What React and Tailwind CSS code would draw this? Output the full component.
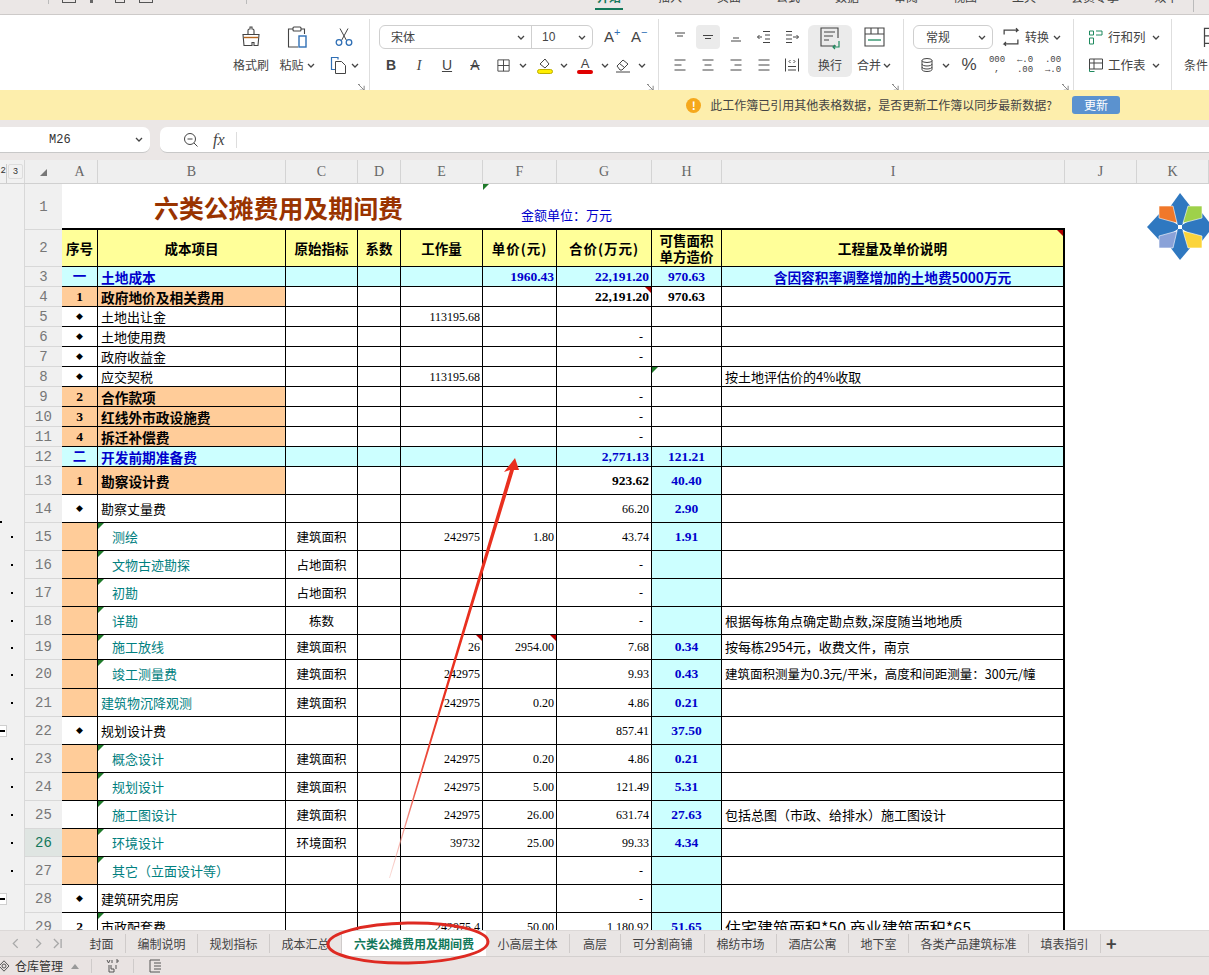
import React from 'react';
import clsx from 'clsx';

const CJK = "font-['Noto_Sans_CJK_SC',sans-serif]";
const NUM = "font-['Liberation_Serif','Noto_Sans_CJK_SC',serif]";

const ORANGE = 'bg-[#ffcc99]';
const CYAN = 'bg-[#ccffff]';
const YELLOW = 'bg-[#ffff99]';

const Chev = ({ className = '' }) => (
    <svg viewBox="0 0 8 5" className={clsx('h-[5px] w-[8px] shrink-0', className)} fill="none" stroke="#444" strokeWidth="1.3">
        <path d="M1 1l3 3 3-3" />
    </svg>
);

const Ic = ({ size = 16, children, className = '' }) => (
    <svg viewBox="0 0 16 16" width={size} height={size} fill="none" stroke="#444" strokeWidth="1" className={clsx('shrink-0', className)}>
        {children}
    </svg>
);

const Corner = () => (
    <svg viewBox="0 0 8 8" className="h-[7px] w-[7px]" fill="none" stroke="#777" strokeWidth="1">
        <path d="M0 .5h2M.5 .5L6.5 6.5M7 2v5H2" />
    </svg>
);

const Group = ({ className, children, corner }) => (
    <div className={clsx('flex h-full shrink-0 flex-col border-r border-[#dedede]', className)}>
        <div className="flex flex-1 pt-[6px]">{children}</div>
        <div className="flex h-[10px] justify-end pr-[4px]">{corner && <Corner />}</div>
    </div>
);

// one row of the ribbon, same height everywhere
const RR = ({ className, children }) => <div className={clsx('flex h-[24px] items-center', className)}>{children}</div>;

const AlignIcon = ({ d }) => (
    <Ic size={16}>
        <path d={d} />
    </Ic>
);

function Ribbon() {
    return (
        <div className={clsx('flex h-[75px] shrink-0 overflow-hidden bg-white text-[12px] text-[#444] shadow-[0_1px_2px_#bbb]', CJK)}>
            <div className="w-[232px] shrink-0" />
            <Group className="my-[4px] w-[138px]" corner>
                <div className="flex w-[38px] flex-col items-center gap-[4px]">
                    <RR>
                        <svg viewBox="0 0 24 24" width="24" height="24" fill="none" stroke="#444" strokeWidth="1.1">
                            <path d="M9 9V5.500c0-1 .8-1.500 1.500-1.500h.5V2h2v2h.5c.8 0 1.500.6 1.500 1.500V9" />
                            <path d="M4 9.500h16l-1 11H15v-3h-2v3H5z" />
                            <path d="M5 12.500h14" stroke="#b5651d" strokeWidth="1.4" />
                        </svg>
                    </RR>
                    <RR>格式刷</RR>
                </div>
                <div className="ml-[2px] flex w-[50px] flex-col items-center gap-[4px]">
                    <RR>
                        <svg viewBox="0 0 24 24" width="24" height="24" fill="none" stroke="#444" strokeWidth="1.1">
                            <path d="M8 4H3.500v18H13M16 4h3.500v5" />
                            <rect x="8" y="2" width="8" height="4" rx="1" />
                            <rect x="14" y="11" width="7" height="11" stroke="#2f6fb5" strokeWidth="1.4" />
                        </svg>
                    </RR>
                    <RR className="gap-[3px]">粘贴<Chev /></RR>
                </div>
                <div className="flex w-[46px] flex-col items-center gap-[4px] pr-[2px]">
                    <RR>
                        <svg viewBox="0 0 20 20" width="20" height="20" fill="none" stroke="#444" strokeWidth="1">
                            <path d="M6 1.500l6.500 12M14 1.500L7.500 13.500" />
                            <circle cx="5" cy="15.500" r="2.800" stroke="#2f6fb5" strokeWidth="1.3" />
                            <circle cx="15" cy="15.500" r="2.800" stroke="#2f6fb5" strokeWidth="1.3" />
                        </svg>
                    </RR>
                    <RR className="gap-[3px]">
                        <svg viewBox="0 0 18 18" width="18" height="18" fill="none" stroke="#444" strokeWidth="1">
                            <path d="M8 3.500V1.500H1.500v12H5" stroke="#2f6fb5" strokeWidth="1.2" />
                            <path d="M5.500 5.500h6l4 4v8h-10z" />
                        </svg>
                        <Chev />
                    </RR>
                </div>
            </Group>
            <Group className="my-[4px] w-[289px] pl-[9px]" corner>
                <div className="flex flex-col gap-[4px]">
                    <div className="flex items-center">
                        <div className="flex h-[24px] w-[214px] items-center rounded-[6px] border border-[#cfcfcf]">
                            <div className="flex h-full w-[152px] items-center justify-between border-r border-[#cfcfcf] pl-[11px] pr-[6px]">
                                <span>宋体</span><Chev />
                            </div>
                            <div className="flex h-full flex-1 items-center justify-between pl-[10px] pr-[6px] font-['Liberation_Sans']">
                                <span>10</span><Chev />
                            </div>
                        </div>
                        <div className={clsx('ml-[11px] w-[27px] text-[15px]', "font-['Liberation_Sans']")}>A<sup className="text-[11px] text-[#2f6fb5]">+</sup></div>
                        <div className={clsx('w-[27px] text-[15px]', "font-['Liberation_Sans']")}>A<sup className="text-[11px] text-[#2f6fb5]">−</sup></div>
                    </div>
                    <RR className="-ml-[2px] font-['Liberation_Sans'] text-[14px]">
                        <div className="w-[28px] text-center font-bold">B</div>
                        <div className="w-[28px] text-center font-['Liberation_Serif'] italic">I</div>
                        <div className="w-[28px] text-center underline">U</div>
                        <div className="w-[28px] text-center line-through">A</div>
                        <div className="flex w-[41px] items-center gap-[8px] pl-[7px]">
                            <Ic size={15}><path d="M2 2h12v12H2zM8 2v12M2 8h12" /></Ic><Chev />
                        </div>
                        <div className="flex w-[41px] items-center gap-[7px] pl-[7px]">
                            <svg viewBox="0 0 16 18" width="16" height="18" fill="none" stroke="#444" strokeWidth="1">
                                <path d="M3 8l5-5 4 5-4 4z" />
                                <rect x=".5" y="13.500" width="15" height="4" rx="2" fill="#ffee00" stroke="#bcae00" />
                            </svg>
                            <Chev />
                        </div>
                        <div className="flex w-[40px] items-center gap-[8px] pl-[6px]">
                            <div className="flex w-[16px] flex-col items-center">
                                <span className="text-[13px] leading-[13px]">A</span>
                                <div className="h-[4px] w-[16px] rounded-[2px] bg-[#e00000]" />
                            </div>
                            <Chev />
                        </div>
                        <div className="flex items-center gap-[7px] pl-[4px]">
                            <Ic size={16}><path d="M2 9l6-6 5 4-6 6H5zM4.500 6.500l5 4M1 15h14" /></Ic><Chev />
                        </div>
                    </RR>
                </div>
            </Group>
            <Group className="my-[4px] w-[245px] pl-[7px]" corner>
                <div className="grid h-[52px] w-[140px] grid-cols-5 gap-y-[4px]">
                    <RR className="justify-center"><AlignIcon d="M3 4h10M5 7h6" /></RR>
                    <RR className="justify-center"><div className="flex h-[24px] w-[24px] items-center justify-center rounded-[4px] bg-[#ebebeb]"><AlignIcon d="M3 6.500h10M5 9.500h6" /></div></RR>
                    <RR className="justify-center"><AlignIcon d="M5 9h6M3 12h10" /></RR>
                    <RR className="justify-center"><AlignIcon d="M7 2.500h7M9 6h5M9 10h5M7 13.500h7M6 8H1.500M3.500 6L1.500 8l2 2" /></RR>
                    <RR className="justify-center"><AlignIcon d="M8 2.500H2M8 6H2M8 10H2M8 13.500H2M9 8h5.500M12.500 6l2 2-2 2" /></RR>
                    <RR className="justify-center"><AlignIcon d="M2.500 3h11M2.500 8h7M2.500 13h11" /></RR>
                    <RR className="justify-center"><AlignIcon d="M2.500 3h11M4.500 8h7M2.500 13h11" /></RR>
                    <RR className="justify-center"><AlignIcon d="M2.500 3h11M6.500 8h7M2.500 13h11" /></RR>
                    <RR className="justify-center"><AlignIcon d="M2.500 3h11M2.500 8h11M2.500 13h11" /></RR>
                    <RR className="justify-center"><AlignIcon d="M1.500 1.500v13M14.500 1.500v13M4 9.500h8M4 13h8M6.500 3L5 4.500 6.500 6M9.500 3L11 4.500 9.500 6" /></RR>
                </div>
                <div className="ml-[2px] flex h-[52px] w-[44px] flex-col items-center rounded-[6px] bg-[#ebebeb] pt-[1px]">
                    <svg viewBox="0 0 24 24" width="24" height="24" fill="none" stroke="#444" strokeWidth="1.100">
                        <path d="M18 20H3V2h17v10M6 6h11M6 10h9M6 14h5" />
                        <path d="M21 15v6h-6M17 19l-2 2 2 2" stroke="#1f8a5f" strokeWidth="1.200" />
                    </svg>
                    <span className="mt-[6px]">换行</span>
                </div>
                <div className="flex w-[44px] flex-col items-center pt-[1px]">
                    <svg viewBox="0 0 24 24" width="24" height="24" fill="none" stroke="#444" strokeWidth="1.100">
                        <path d="M3 2h19v18H3zM3 8h19M9 2v6M16 2v6" />
                        <path d="M6 14h13" stroke="#1f8a5f" strokeWidth="1.300" />
                    </svg>
                    <span className="mt-[6px] flex items-center gap-[2px] whitespace-nowrap">合并<Chev /></span>
                </div>
            </Group>
            <Group className="my-[4px] w-[170px] pl-[9px]" corner>
                <div className="flex flex-col gap-[4px]">
                    <RR>
                        <div className="flex h-[24px] w-[80px] items-center justify-between rounded-[6px] border border-[#cfcfcf] pl-[12px] pr-[6px]">
                            <span>常规</span><Chev />
                        </div>
                        <div className="ml-[8px] flex items-center gap-[4px]">
                            <Ic size={20}><path d="M2.500 6V2.500h11l-1.500-1.500M13.500 2.500L12 4M13.500 10v3.500h-11l1.500-1.500M2.500 13.500L4 15" /></Ic>
                            <span>转换</span><Chev />
                        </div>
                    </RR>
                    <RR>
                        <div className="flex w-[42px] items-center gap-[7px] pl-[6px]">
                            <Ic size={16}><ellipse cx="8" cy="3.500" rx="5" ry="2" /><path d="M3 3.500v9c0 1.100 2.200 2 5 2s5-.9 5-2v-9M3 7c0 1.100 2.200 2 5 2s5-.9 5-2M3 10c0 1.100 2.200 2 5 2s5-.9 5-2" /></Ic>
                            <Chev />
                        </div>
                        <div className="w-[28px] text-center text-[17px] font-['Liberation_Sans']">%</div>
                        <div className="flex w-[28px] flex-col items-center font-['Liberation_Mono'] text-[9px] leading-[9px]">000<span>,</span></div>
                        <div className="flex w-[28px] flex-col items-center font-['Liberation_Mono'] text-[9px] leading-[10px]"><span>←.0</span><span>.00</span></div>
                        <div className="flex w-[28px] flex-col items-center font-['Liberation_Mono'] text-[9px] leading-[10px]"><span>.00</span><span>→.0</span></div>
                    </RR>
                </div>
            </Group>
            <Group className="my-[4px] w-[98px] pl-[14px]">
                <div className="flex flex-col gap-[4px]">
                    <RR className="gap-[4px] whitespace-nowrap">
                        <Ic size={16}><path d="M1.500 2h4v4h-4zM8 2h6v4H8M1.500 9h4v6h-4z" stroke="#1f8a5f" /></Ic>
                        <span className="text-[12.500px]">行和列</span><Chev className="ml-[2px]" />
                    </RR>
                    <RR className="gap-[4px] whitespace-nowrap">
                        <Ic size={16}><path d="M1.500 2h13v10h-13zM1.500 6h13M6 2v10" /><path d="M1.500 12v2.500h5" stroke="#1f8a5f" /></Ic>
                        <span className="text-[12.500px]">工作表</span><Chev className="ml-[2px]" />
                    </RR>
                </div>
            </Group>
            <div className="flex w-[40px] shrink-0 flex-col items-start gap-[4px] pl-[12px] pt-[10px]">
                <RR className="pl-[18px]"><Ic size={20}><path d="M2 1h12v18H2zM2 7h12M2 13h12M8 1v18" /></Ic></RR>
                <RR className="whitespace-nowrap">条件</RR>
            </div>
        </div>
    );
}

const W = {
    a: 'w-[36px]', b: 'w-[188px]', c: 'w-[72px]', d: 'w-[43px]', e: 'w-[82px]',
    f: 'w-[74px]', g: 'w-[95px]', h: 'w-[70px]', i: 'w-[343px]', j: 'w-[72px]', k: 'w-[72px]',
};

const Tri = ({ red, className = '' }) => (
    <div
        className={clsx(
            'absolute top-0 h-0 w-0 border-t-[6px]',
            red ? 'right-0 border-l-[6px] border-l-transparent border-t-[#b00000]' : 'left-0 border-r-[6px] border-r-transparent border-t-[#1f7a2a]',
            className
        )}
    />
);

const Cell = ({ w, bg, className, children, red, green, last }) => (
    <div
        className={clsx(
            'relative flex shrink-0 items-center overflow-hidden whitespace-nowrap border-b border-black leading-[16px]',
            last ? 'border-r-2' : 'border-r',
            w,
            bg,
            className
        )}
    >
        {green && <Tri />}
        {red && <Tri red />}
        {children}
    </div>
);

const rows = [
    { n: 3, h: 'h-[20px]', t: 'sec', a: '一', b: '土地成本', f: '1960.43', g: '22,191.20', v: '970.63', i: '含因容积率调整增加的土地费5000万元' },
    { n: 4, h: 'h-[20px]', t: 'head', a: '1', b: '政府地价及相关费用', g: '22,191.20', v: '970.63', gRed: true, white: true },
    { n: 5, h: 'h-[20px]', t: 'item', b: '土地出让金', e: '113195.68', white: true },
    { n: 6, h: 'h-[20px]', t: 'item', b: '土地使用费', g: '-', white: true },
    { n: 7, h: 'h-[20px]', t: 'item', b: '政府收益金', g: '-', white: true },
    { n: 8, h: 'h-[20px]', t: 'item', b: '应交契税', e: '113195.68', i: '按土地评估价的4%收取', hGreen: true, white: true },
    { n: 9, h: 'h-[20px]', t: 'head', a: '2', b: '合作款项', g: '-', white: true },
    { n: 10, h: 'h-[20px]', t: 'head', a: '3', b: '红线外市政设施费', g: '-', white: true },
    { n: 11, h: 'h-[20px]', t: 'head', a: '4', b: '拆迁补偿费', g: '-', white: true },
    { n: 12, h: 'h-[20px]', t: 'sec', a: '二', b: '开发前期准备费', g: '2,771.13', v: '121.21' },
    { n: 13, h: 'h-[28px]', t: 'head', a: '1', b: '勘察设计费', g: '923.62', v: '40.40' },
    { n: 14, h: 'h-[28px]', t: 'item', b: '勘察丈量费', g: '66.20', v: '2.90', dot0: true },
    { n: 15, h: 'h-[28px]', t: 'sub', b: '测绘', c: '建筑面积', e: '242975', f: '1.80', g: '43.74', v: '1.91', dot: true },
    { n: 16, h: 'h-[28px]', t: 'sub', b: '文物古迹勘探', c: '占地面积', g: '-', dot: true },
    { n: 17, h: 'h-[28px]', t: 'sub', b: '初勘', c: '占地面积', g: '-', dot: true },
    { n: 18, h: 'h-[28px]', t: 'sub', b: '详勘', c: '栋数', g: '-', i: '根据每栋角点确定勘点数,深度随当地地质', dot: true },
    { n: 19, h: 'h-[25px]', t: 'sub', b: '施工放线', c: '建筑面积', e: '26', f: '2954.00', g: '7.68', v: '0.34', i: '按每栋2954元，收费文件，南京', eRed: true, fRed: true, dot: true },
    { n: 20, h: 'h-[29px]', t: 'sub', b: '竣工测量费', c: '建筑面积', e: '242975', g: '9.93', v: '0.43', i: '建筑面积测量为0.3元/平米，高度和间距测量：300元/幢', iSmall: true, dot: true },
    { n: 21, h: 'h-[28px]', t: 'sub', flush: true, noTri: true, b: '建筑物沉降观测', c: '建筑面积', e: '242975', f: '0.20', g: '4.86', v: '0.21', dot: true },
    { n: 22, h: 'h-[28px]', t: 'item', b: '规划设计费', g: '857.41', v: '37.50', minus: true },
    { n: 23, h: 'h-[28px]', t: 'sub', b: '概念设计', c: '建筑面积', e: '242975', f: '0.20', g: '4.86', v: '0.21', dot: true },
    { n: 24, h: 'h-[28px]', t: 'sub', b: '规划设计', c: '建筑面积', e: '242975', f: '5.00', g: '121.49', v: '5.31', dot: true },
    { n: 25, h: 'h-[28px]', t: 'sub', plain: true, b: '施工图设计', c: '建筑面积', e: '242975', f: '26.00', g: '631.74', v: '27.63', i: '包括总图（市政、给排水）施工图设计', dot: true },
    { n: 26, h: 'h-[28px]', t: 'sub', b: '环境设计', c: '环境面积', e: '39732', f: '25.00', g: '99.33', v: '4.34', dot: true, active: true },
    { n: 27, h: 'h-[28px]', t: 'sub', b: '其它（立面设计等）', c: '', g: '-', dot: true },
    { n: 28, h: 'h-[28px]', t: 'item', b: '建筑研究用房', g: '-', minus: true },
    { n: 29, h: 'h-[28px]', t: 'last', a: '2', b: '市政配套费', e: '242975.4', f: '50.00', g: '1,180.92', v: '51.65', i: '住宅建筑面积*50 商业建筑面积*65', bGreen: true },
];

const RowHead = ({ n, h, active, dot, dot0, minus }) => (
    <>
        <div className={clsx('flex w-[24px] shrink-0 bg-[#f1f1f1]', h, dot0 ? 'items-end justify-start' : 'items-center justify-center')}>
            {(dot || dot0) && <div className="h-[2px] w-[2px] bg-black" />}
            {minus && <div className="mr-auto flex h-[12px] w-[7px] items-center border-y border-r border-[#cfcfcf] bg-white"><div className="h-[1.500px] w-[5px] bg-black" /></div>}
        </div>
        <div
            className={clsx(
                "flex w-[38px] shrink-0 items-center justify-center border-b border-l border-[#d8d8d8] font-['Liberation_Mono'] text-[14px] leading-[16px]",
                h,
                active ? 'bg-[#dfe5e2] text-[#12785a]' : 'bg-[#f0f0f0] text-[#777]'
            )}
        >
            {n}
        </div>
    </>
);

function Row({ r }) {
    const isSec = r.t === 'sec';
    const rowBg = isSec ? CYAN : 'bg-white';
    const aBg = isSec ? CYAN : r.t === 'head' || (r.t === 'sub' && !r.plain) ? ORANGE : 'bg-white';
    const bBg = isSec ? CYAN : r.t === 'head' ? ORANGE : 'bg-white';
    const vBg = isSec ? CYAN : r.white ? 'bg-white' : CYAN;
    const nameBold = isSec || r.t === 'head';
    const numBlue = isSec ? 'font-bold text-[13.500px] text-[#0000cc]' : 'text-[12px] text-black';

    return (
        <div className={clsx('flex', r.h)}>
            <RowHead {...r} />
            <Cell w={W.a} bg={aBg} className={clsx('justify-center font-bold text-[13.500px]', NUM, isSec ? 'text-[#0000cc]' : 'text-black')}>
                {r.t === 'item' ? <span className="text-[7px]">◆</span> : r.a}
            </Cell>
            <Cell
                w={W.b}
                bg={bBg}
                green={(r.t === 'sub' && !r.noTri) || r.bGreen}
                className={clsx(
                    CJK,
                    r.t === 'sub' && !r.flush ? 'pl-[14px]' : 'pl-[3px]',
                    nameBold ? 'text-[13.700px] font-bold' : 'text-[13px]',
                    isSec ? 'text-[#0000cc]' : r.t === 'sub' ? 'text-[#008080]' : 'text-black'
                )}
            >
                {r.b}
            </Cell>
            <Cell w={W.c} bg={rowBg} className={clsx('justify-center text-[12.500px] text-black', CJK)}>{r.c}</Cell>
            <Cell w={W.d} bg={rowBg} />
            <Cell w={W.e} bg={rowBg} red={r.eRed} className={clsx('justify-end pr-[2px] text-[12px] text-black', NUM)}>{r.e}</Cell>
            <Cell w={W.f} bg={rowBg} red={r.fRed} className={clsx('justify-end pr-[2px]', NUM, numBlue)}>{r.f}</Cell>
            <Cell
                w={W.g}
                bg={rowBg}
                red={r.gRed}
                className={clsx('justify-end', r.g === '-' ? 'pr-[8px]' : 'pr-[2px]', NUM, r.t === 'head' && r.a === '1' && r.g !== '-' ? 'text-[13.500px] font-bold text-black' : numBlue)}
            >
                {r.g}
            </Cell>
            <Cell
                w={W.h}
                bg={vBg}
                green={r.hGreen}
                className={clsx('justify-center text-[13.500px] font-bold', NUM, r.white ? 'text-black' : 'text-[#0000cc]')}
            >
                {r.v}
            </Cell>
            <Cell
                w={W.i}
                bg={rowBg}
                last
                className={clsx(
                    CJK,
                    isSec ? 'justify-center text-[13.700px] font-bold text-[#0000cc]' : 'pl-[3px] text-black',
                    r.t === 'last' ? 'text-[16px]' : r.iSmall ? 'text-[12.500px]' : !isSec && 'text-[13px]'
                )}
            >
                {r.i}
            </Cell>
            <div className="flex-1 bg-white" />
        </div>
    );
}

const headers = [
    ['A', W.a], ['B', W.b], ['C', W.c], ['D', W.d], ['E', W.e], ['F', W.f],
    ['G', W.g], ['H', W.h], ['I', W.i], ['J', W.j], ['K', W.k],
];

const headerRow = [
    ['序号', W.a, ''],
    ['成本项目', W.b, ''],
    ['原始指标', W.c, ''],
    ['系数', W.d, ''],
    ['工作量', W.e, ''],
    ['单价(元)', W.f, 'tracking-[1px]'],
    ['合价(万元)', W.g, 'tracking-[1px]'],
];

function Sheet() {
    return (
        <div className="relative min-h-0 flex-1 overflow-hidden bg-white">
            <div className="flex h-[24px] border-b border-[#d0d0d0] bg-[#efefef]">
                <div className={clsx('flex w-[24px] shrink-0 gap-[1px] bg-[#f1f1f1] pt-[4px] text-[9px] leading-[14px] text-[#333]', "font-['Liberation_Mono']")}>
                    <span className="w-[7px] overflow-hidden border-r border-[#ccc] text-right">2</span>
                    <span className="h-[15px] w-[15px] rounded-[2px] border border-[#ddd] text-center">3</span>
                </div>
                <div className="flex w-[38px] shrink-0 items-center justify-center border-l border-[#d8d8d8]">
                    <div className="mt-[2px] h-0 w-0 border-b-[7px] border-l-[7px] border-b-[#777] border-l-transparent" />
                </div>
                {headers.map(([l, w]) => (
                    <div key={l} className={clsx('flex shrink-0 items-center justify-center border-r border-[#d4d4d4] text-[14px] text-[#666]', NUM, w)}>{l}</div>
                ))}
            </div>

            <div className="flex h-[46px]">
                <RowHead n={1} h="h-[46px]" />
                <div className={clsx('relative flex h-[46px] w-[1003px] shrink-0 border-b-2 border-black bg-white', CJK)}>
                    <div className="ml-[92px] w-[350px] pt-[5px] text-[24.900px] font-bold leading-[36px] text-[#993300]">六类公摊费用及期间费</div>
                    <div className="ml-[17px] pt-[22px] text-[13px] leading-[18px] text-[#0000cc]">金额单位：万元</div>
                    <Tri className="left-[421px]" />
                </div>
            </div>

            <div className="flex h-[37px]">
                <RowHead n={2} h="h-[37px]" />
                {headerRow.map(([t, w, extra]) => (
                    <Cell key={t} w={w} bg={YELLOW} className={clsx('justify-center text-[13.500px] font-bold text-black', CJK, extra)}>{t}</Cell>
                ))}
                <Cell w={W.h} bg={YELLOW} className={clsx('justify-center text-center text-[13.500px] font-bold text-black', CJK)}>
                    <div className="flex flex-col leading-[16px]"><span>可售面积</span><span>单方造价</span></div>
                </Cell>
                <Cell w={W.i} bg={YELLOW} last red className={clsx('justify-center text-[13.700px] font-bold text-black', CJK)}>工程量及单价说明</Cell>
            </div>

            {rows.map((r) => <Row key={r.n} r={r} />)}
        </div>
    );
}

const tabs = [
    ['封面', 'w-[48px] justify-center'],
    ['编制说明', 'w-[72px] justify-center'],
    ['规划指标', 'w-[72px] justify-center'],
    ['成本汇总', 'w-[72px] justify-center'],
];
const tabsAfter = [
    ['小高层主体', 'w-[84px] justify-center'],
    ['高层', 'w-[51px] justify-center'],
    ['可分割商铺', 'w-[84px] justify-center'],
    ['棉纺市场', 'w-[72px] justify-center'],
    ['酒店公寓', 'w-[72px] justify-center'],
    ['地下室', 'w-[60px] justify-center'],
    ['各类产品建筑标准', 'w-[120px] justify-center'],
    ['填表指引', 'w-[72px] justify-center'],
];

const Tab = ({ label, className }) => (
    <div className={clsx('flex h-full shrink-0 items-center', className)}>
        <div className="flex h-[19px] w-full items-center justify-center border-r border-[#cfcbca]">{label}</div>
    </div>
);

function TabBar() {
    return (
        <div className={clsx('flex h-[27px] shrink-0 border-y border-b-[#d4d0cf] border-t-[#dcd8d7] bg-[#e9e5e4] text-[12px] text-[#444]', CJK)}>
            <div className="flex w-[78px] shrink-0 items-center gap-[11px] pl-[12px] text-[#aaa]">
                <svg viewBox="0 0 8 12" className="h-[11px] w-[7px]" fill="none" stroke="#a9a9a9" strokeWidth="1.500"><path d="M6.500 1L1.500 6l5 5" /></svg>
                <svg viewBox="0 0 8 12" className="ml-[5px] h-[11px] w-[7px]" fill="none" stroke="#a9a9a9" strokeWidth="1.500"><path d="M1.500 1l5 5-5 5" /></svg>
                <svg viewBox="0 0 10 12" className="h-[11px] w-[9px]" fill="none" stroke="#a9a9a9" strokeWidth="1.500"><path d="M1 1l5 5-5 5M9 1v10" /></svg>
            </div>
            {tabs.map(([l, c]) => <Tab key={l} label={l} className={c} />)}
            <div className="flex h-full w-[144px] shrink-0 items-center justify-center bg-white font-bold text-[#12785a]">六类公摊费用及期间费</div>
            {tabsAfter.map(([l, c]) => <Tab key={l} label={l} className={c} />)}
            <div className="ml-[5px] flex items-center text-[18px] font-bold text-[#444]">+</div>
        </div>
    );
}

function StatusBar() {
    return (
        <div className={clsx('flex h-[18px] shrink-0 items-center bg-[#e9e3e2] text-[12px] text-[#333]', CJK)}>
            <svg viewBox="0 0 12 12" className="-ml-[2px] h-[12px] w-[12px]" fill="none" stroke="#555" strokeWidth="1"><path d="M6 .8L11 6l-5 5.200L1 6z" /><circle cx="6" cy="6" r="2" /></svg>
            <span className="ml-[5px]">仓库管理</span>
            <div className="ml-[8px] h-0 w-0 border-x-[4px] border-b-[5px] border-x-transparent border-b-[#999]" />
            <div className="ml-[12px] h-[14px] w-px bg-[#cfcbca]" />
            <svg viewBox="0 0 14 14" className="ml-[14px] h-[14px] w-[14px]" fill="none" stroke="#555" strokeWidth="1"><path d="M3 6v7h5v-3H5V6M10 6v4" /><path d="M1 1l1.500 3L4 1M6 1v3M10 1h2v2h-2" /></svg>
            <div className="ml-[13px] h-[14px] w-px bg-[#cfcbca]" />
            <svg viewBox="0 0 14 14" className="ml-[14px] h-[14px] w-[14px]" fill="none" stroke="#555" strokeWidth="1"><path d="M12 1H2v12h10M6 4h7M6 7h7M6 10h7" /></svg>
        </div>
    );
}

function TopStrip() {
    const items = ['插入', '页面', '公式', '数据', '审阅', '视图', '工具', '会员专享', '效率'];
    return (
        <div className={clsx('flex h-[15px] shrink-0 items-start overflow-hidden border-b border-[#cfcccb] bg-[#ebe7e6] text-[12px] leading-[12px] text-[#444]', CJK)}>
            <div className="h-[4px] w-[49px] shrink-0 border-r border-[#bbb]" />
            <div className="ml-[13px] flex w-[185px] shrink-0 gap-[14px] border-r border-[#bbb] pb-[1px]">
                <div className="h-[3px] w-[14px] border-x border-b border-[#555]" />
                <div className="h-[3px] w-[3px] bg-[#666]" />
                <div className="ml-[8px] h-[3px] w-[10px] border-x border-b border-[#555]" />
                <div className="h-[3px] w-[14px] border-x border-b border-[#555]" />
            </div>
            <div className="-mt-[9px] ml-[348px] flex w-[599px] shrink-0 gap-[35px] border-r border-[#bbb] pb-[2px]">
                <div className="flex flex-col items-center">
                    <span className="font-bold text-[#12785a]">开始</span>
                    <div className="mt-[5px] h-[2px] w-[28px] bg-[#12785a]" />
                </div>
                {items.map((t) => <span key={t}>{t}</span>)}
            </div>
        </div>
    );
}

function Overlay() {
    return (
        <svg viewBox="0 0 1209 975" className="pointer-events-none absolute left-0 top-0 h-[975px] w-[1209px]" fill="none">
            <defs>
                <linearGradient id="tail" gradientUnits="userSpaceOnUse" x1="0" y1="884" x2="0" y2="700">
                    <stop offset="0" stopColor="#f3b7ae" stopOpacity="0.4" />
                    <stop offset="0.5" stopColor="#ee5a4c" />
                    <stop offset="1" stopColor="#e9301f" />
                </linearGradient>
            </defs>
            <path d="M389 878L510 470l-6 2L515 458l4 12-5 0L390 878z" fill="url(#tail)" />
            <ellipse cx="408" cy="943" rx="80" ry="20" stroke="#de2a22" strokeWidth="3" transform="rotate(-1 408 943)" />
            {/* 公司 logo */}
            <g>
                <path d="M1180 193L1170 207L1178 225L1182 225L1191 207z" fill="#2f78c0" />
                <path d="M1180 260L1170 247L1178 229L1182 229L1191 247z" fill="#2f78c0" />
                <path d="M1147 227L1160 213L1178 225L1178 229L1160 241z" fill="#2f78c0" />
                <path d="M1213 227L1202 213L1182 225L1182 229L1202 241z" fill="#2f78c0" />
                <path d="M1159 206L1173 206L1177 223L1159 218z" fill="#f0782a" stroke="#fff" strokeWidth=".6" />
                <path d="M1188 206L1202 206L1202 218L1183 223z" fill="#9ed14a" stroke="#fff" strokeWidth=".6" />
                <path d="M1159 236L1177 231L1173 248L1159 248z" fill="#8aa2d8" stroke="#fff" strokeWidth=".6" />
                <path d="M1183 231L1202 236L1202 248L1188 248z" fill="#fbd43a" stroke="#fff" strokeWidth=".6" />
            </g>
        </svg>
    );
}

export default function App() {
    return (
        <div className={clsx('relative flex h-[975px] w-[1209px] flex-col overflow-hidden bg-[#ebe7e6]', CJK)}>
            <TopStrip />
            <Ribbon />

            <div className="flex h-[30px] shrink-0 items-center justify-end bg-[#fdeeac] pr-[89px] text-[12px] text-[#444]">
                <div className="mr-[9px] flex h-[15px] w-[15px] items-center justify-center rounded-full bg-[#f5a81c] text-[11px] font-bold text-white">!</div>
                <span>此工作簿已引用其他表格数据，是否更新工作簿以同步最新数据?</span>
                <div className="ml-[20px] flex h-[18px] w-[48px] items-center justify-center rounded-[3px] bg-[#5b92cf] text-white">更新</div>
            </div>

            <div className="flex h-[40px] shrink-0 py-[7px]">
                <div className="flex w-[150px] shrink-0 items-center rounded-r-[7px] border-b border-[#c8c8c8] bg-white pl-[49px] pr-[6px]">
                    <span className="font-['Liberation_Mono'] text-[12px] text-[#333]">M26</span>
                    <Chev className="ml-auto mr-[1px]" />
                </div>
                <div className="ml-[10px] flex flex-1 items-center rounded-l-[7px] border-b border-[#c8c8c8] bg-white pl-[23px]">
                    <Ic size={16}><circle cx="7" cy="7" r="5.500" /><path d="M4.500 7h5M11 11l3.500 3.500" /></Ic>
                    <span className="ml-[14px] font-['Liberation_Serif'] text-[16px] italic text-[#444]">fx</span>
                    <div className="ml-[11px] h-[16px] w-px bg-[#ddd]" />
                </div>
            </div>

            <Sheet />
            <TabBar />
            <StatusBar />
            <Overlay />
        </div>
    );
}
